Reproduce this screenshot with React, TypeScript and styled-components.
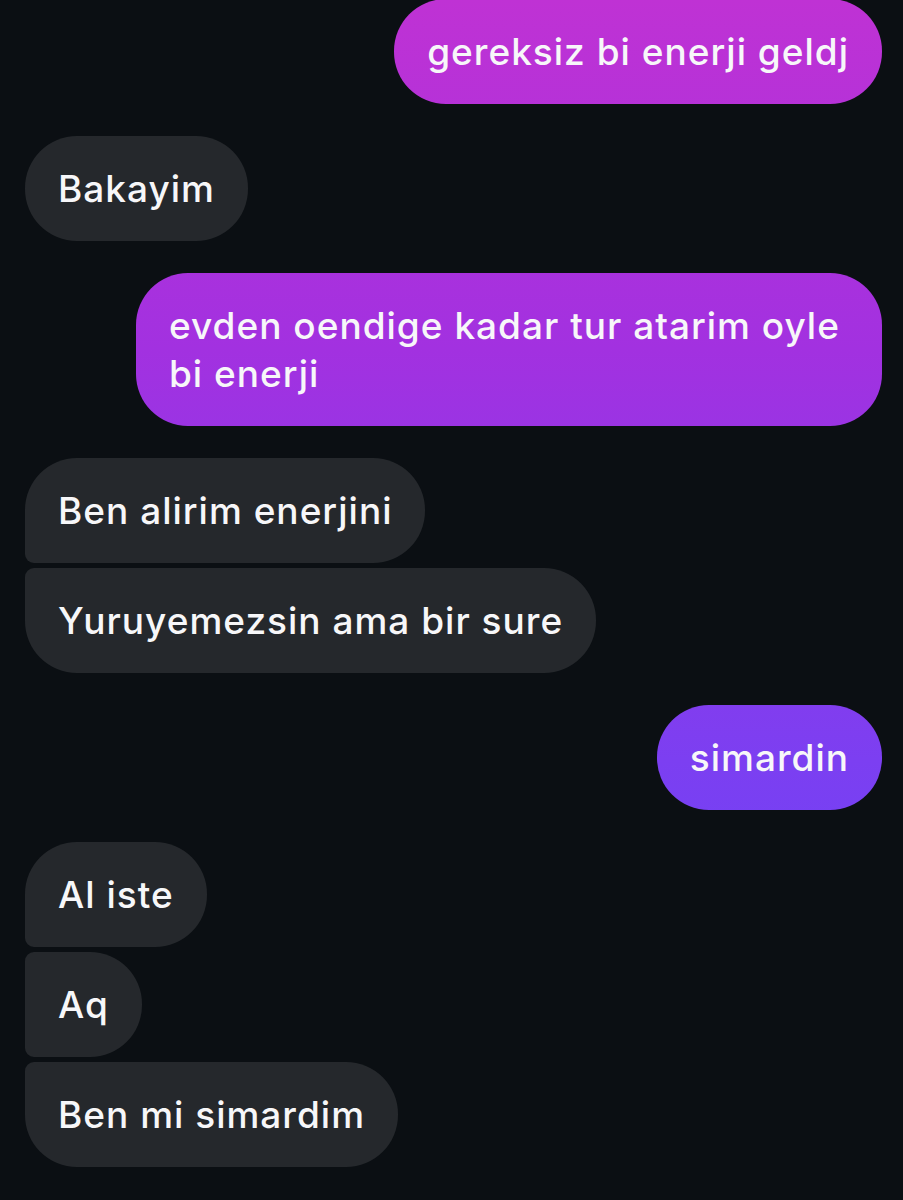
import React from 'react';
import styled, { createGlobalStyle, css } from 'styled-components';

type Side = 'in' | 'out';
type Pos = 'single' | 'first' | 'middle' | 'last';

type Message = {
  side: Side;
  text: string;
};

const messages: Message[] = [
  { side: 'out', text: 'gereksiz bi enerji geldj' },
  { side: 'in', text: 'Bakayim' },
  { side: 'out', text: 'evden oendige kadar tur atarim oyle bi enerji' },
  { side: 'in', text: 'Ben alirim enerjini' },
  { side: 'in', text: 'Yuruyemezsin ama bir sure' },
  { side: 'out', text: 'simardin' },
  { side: 'in', text: 'Al iste' },
  { side: 'in', text: 'Aq' },
  { side: 'in', text: 'Ben mi simardim' },
];

// consecutive messages from the same side form a group
const groupMessages = (list: Message[]): Message[][] => {
  const groups: Message[][] = [];
  list.forEach((m) => {
    const last = groups[groups.length - 1];
    if (last && last[0].side === m.side) last.push(m);
    else groups.push([m]);
  });
  return groups;
};

const positionOf = (index: number, count: number): Pos => {
  if (count === 1) return 'single';
  if (index === 0) return 'first';
  if (index === count - 1) return 'last';
  return 'middle';
};

const GlobalStyle = createGlobalStyle`
  html, body {
    margin: 0;
    padding: 0;
    background: #0b0f13;
  }
  body {
    font-family: Inter, "Noto Sans", "Liberation Sans", sans-serif;
    -webkit-font-smoothing: antialiased;
  }
`;

const Thread = styled.div`
  display: flex;
  flex-direction: column;
  gap: 32px;
  width: 903px;
  min-height: 1200px;
  box-sizing: border-box;
  margin-top: -1px;
  padding: 0 21px 0 25px;
  background: #0b0f13;
`;

const Group = styled.div<{ $side: Side }>`
  display: flex;
  flex-direction: column;
  gap: 5px;
  align-items: ${({ $side }) => ($side === 'out' ? 'flex-end' : 'flex-start')};
`;

const BIG = '52px';
const SMALL = '9px';

const cornerRadius = (side: Side, pos: Pos) => {
  const top = pos === 'middle' || pos === 'last' ? SMALL : BIG;
  const bottom = pos === 'first' || pos === 'middle' ? SMALL : BIG;
  return side === 'in'
    ? `${top} ${BIG} ${BIG} ${bottom}`
    : `${BIG} ${top} ${bottom} ${BIG}`;
};

const Bubble = styled.div<{ $side: Side; $pos: Pos }>`
  box-sizing: border-box;
  max-width: 746px;
  padding: 28.5px 33px;
  font-size: 37px;
  line-height: 48px;
  font-weight: 500;
  letter-spacing: 1px;
  color: #f7f7f9;
  border-radius: ${({ $side, $pos }) => cornerRadius($side, $pos)};
  ${({ $side }) =>
    $side === 'out'
      ? css`
          background: linear-gradient(
              to bottom,
              #bf32d4 0px,
              #a231e0 350px,
              #7c3ff1 760px,
              #5a46ff 1200px
            )
            fixed;
        `
      : css`
          background: #25282c;
        `}
`;

const App = (): JSX.Element => {
  const groups = groupMessages(messages);

  return (
    <>
      <GlobalStyle />
      <Thread>
        {groups.map((group, gi) => (
          <Group key={gi} $side={group[0].side}>
            {group.map((m, i) => (
              <Bubble key={i} $side={m.side} $pos={positionOf(i, group.length)}>
                {m.text}
              </Bubble>
            ))}
          </Group>
        ))}
      </Thread>
    </>
  );
};

export default App;
